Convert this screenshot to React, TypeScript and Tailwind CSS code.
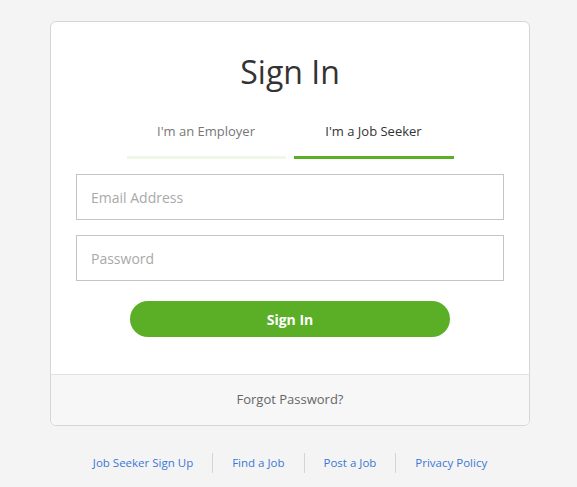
export default function App() {
  const links = ["Job Seeker Sign Up", "Find a Job", "Post a Job", "Privacy Policy"];
  return (
    <div
      className="min-h-screen bg-[#f4f4f4] pt-[21px]"
      style={{ fontFamily: '"Open Sans", "Noto Sans", sans-serif' }}
    >
      <div className="ml-[50px] w-[480px] rounded-md border border-[#d6d6d6] bg-white overflow-hidden">
        <h1 className="pt-[28px] text-center text-[32px] leading-[44px] text-[#333]">Sign In</h1>
        <div className="mt-[22px] flex justify-center gap-[8px]">
          <button className="w-[159px] border-b-[3px] border-[#f1f7e8] pt-[5px] pb-[15px] text-[13px] leading-5 text-[#777]">
            I'm an Employer
          </button>
          <button className="w-[160px] border-b-[3px] border-[#5aaf27] pt-[5px] pb-[15px] text-[13px] leading-5 text-[#333]">
            I'm a Job Seeker
          </button>
        </div>
        <div className="mt-[15px] flex flex-col gap-[15px] px-[25px]">
          <input
            type="email"
            placeholder="Email Address"
            className="h-[46px] w-full border border-[#c4c4c4] px-[14px] text-[14px] placeholder:text-[#a9a9a9] outline-none"
          />
          <input
            type="password"
            placeholder="Password"
            className="h-[46px] w-full border border-[#c4c4c4] px-[14px] text-[14px] placeholder:text-[#a9a9a9] outline-none"
          />
        </div>
        <div className="mt-[20px] flex justify-center pb-[37px]">
          <button className="h-[36px] w-[320px] rounded-full bg-[#5aaf27] text-[14px] font-bold text-white">
            Sign In
          </button>
        </div>
        <div className="flex h-[51px] items-center justify-center border-t border-[#e2e2e2] bg-[#f7f7f7] text-[13px] text-[#666]">
          Forgot Password?
        </div>
      </div>
      <div className="mt-[27px] ml-[50px] flex w-[480px] items-center justify-center">
        {links.map((l, i) => (
          <div key={l} className="flex items-center">
            {i > 0 && <span className="h-[20px] w-px bg-[#d4d4d4]" />}
            <a href="#" className="px-[19px] text-[11.5px] leading-5 text-[#3a78d6]">
              {l}
            </a>
          </div>
        ))}
      </div>
    </div>
  );
}
